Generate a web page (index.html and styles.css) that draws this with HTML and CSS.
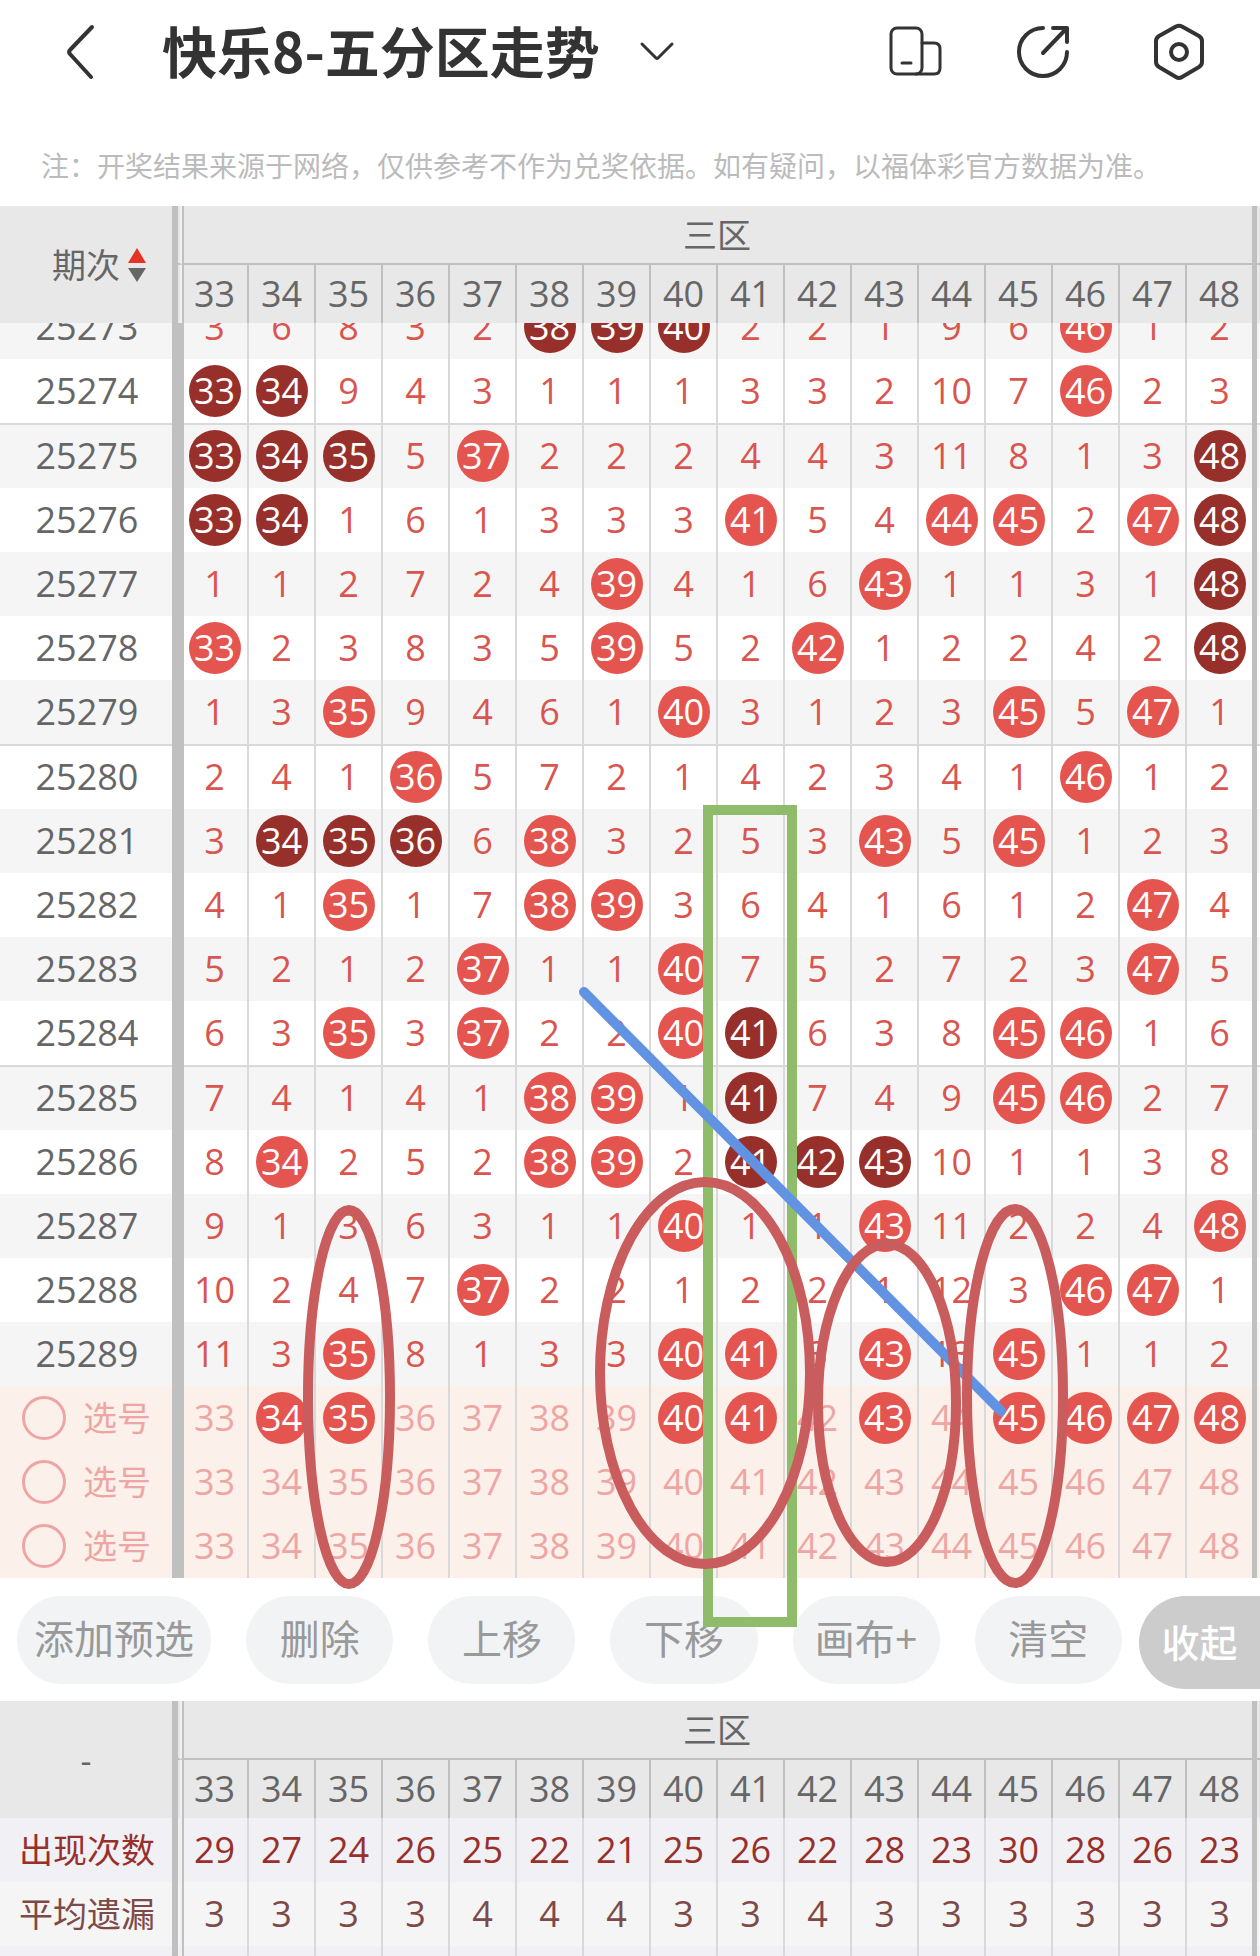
FILE: index.html
```html
<!DOCTYPE html>
<html lang="zh-CN">
<head>
    <meta charset="UTF-8">
    <meta name="viewport" content="width=device-width, initial-scale=1.0">
    <title>快乐8-五分区走势</title>
    <link rel="stylesheet" href="styles.css">
</head>
<body>
    <div class="app">
        <header class="nav">
            <button class="back" aria-label="返回">
                <svg width="32" height="56" viewBox="0 0 32 56"><path d="M28 3L6 26Q4 28 6 30L27 53"/></svg>
            </button>
            <h1>快乐8-五分区走势</h1>
            <button class="more" aria-label="切换走势">
                <svg width="34" height="20" viewBox="0 0 34 20"><path d="M2 2L16 16Q17 17 18 16L32 2"/></svg>
            </button>
            <div class="tools">
                <button aria-label="横竖屏">
                    <svg width="56" height="56" viewBox="0 0 56 56"><rect x="3" y="4" width="31" height="46" rx="6"/><path d="M34 19H46Q52 19 52 25V44Q52 50 46 50H28M14 39H23"/></svg>
                </button>
                <button aria-label="分享">
                    <svg class="thick" width="56" height="56" viewBox="5 0 56 56"><path d="M28 4A24 24 0 1 0 52 28M38 4H52V18M51 5L28 29"/></svg>
                </button>
                <button aria-label="设置">
                    <svg class="thick" width="56" height="56" viewBox="1 0 56 56"><path d="M25 2.500Q28 1 31 2.500L48 12Q51 14 51 17V38Q51 41 48 43L31 53Q28 55 25 53L8 43Q5 41 5 38V17Q5 14 8 12Z"/><circle cx="28" cy="28" r="8"/></svg>
                </button>
            </div>
        </header>
        <p class="note">注：开奖结果来源于网络，仅供参考不作为兑奖依据。如有疑问，以福体彩官方数据为准。</p>

        <table>
            <colgroup><col class="c-period"><col class="c-gap"><col span="16"><col class="c-tail"></colgroup>
            <thead>
                <tr class="zone">
                    <th rowspan="2" class="period">
                        <button class="sort">期次
                            <svg width="18" height="36" viewBox="0 0 18 36"><path class="up" d="M9 1L18 16H0Z"/><path class="down" d="M0 21H18L9 35Z"/></svg>
                        </button>
                    </th>
                    <th class="gap"></th>
                    <th colspan="16" class="first">三区</th>
                    <th class="tail"></th>
                </tr>
                <tr class="nums"></tr>
            </thead>
        </table>
        <div class="trend" id="trend">
            <table>
                <colgroup><col class="c-period"><col class="c-gap"><col span="16"><col class="c-tail"></colgroup>
                <tbody id="rows"></tbody>
                <tbody id="picks"></tbody>
            </table>
        </div>

        <div class="actions">
            <button>添加预选</button>
            <button>删除</button>
            <button>上移</button>
            <button>下移</button>
            <button>画布+</button>
            <button>清空</button>
            <button class="fold">收起</button>
        </div>

        <div class="summary">
            <table>
                <colgroup><col class="c-period"><col class="c-gap"><col span="16"><col class="c-tail"></colgroup>
                <thead>
                    <tr class="zone">
                        <th rowspan="2" class="period">-</th>
                        <th class="gap"></th>
                        <th colspan="16" class="first">三区</th>
                        <th class="tail"></th>
                    </tr>
                    <tr class="nums"></tr>
                </thead>
                <tbody id="stats"></tbody>
            </table>
        </div>

        <!-- 画布标记 -->
        <svg class="canvas" viewBox="0 0 1260 1956" preserveAspectRatio="none">
            <rect class="green" x="708" y="810" width="84" height="812"/>
            <path class="blue" d="M584 992L1001 1411"/>
            <ellipse cx="349" cy="1397" rx="41" ry="187"/>
            <ellipse cx="705" cy="1373" rx="105" ry="191"/>
            <ellipse cx="887" cy="1403" rx="69" ry="159"/>
            <ellipse cx="1015" cy="1396" rx="48" ry="187"/>
        </svg>
    </div>
    <script src="trend.js"></script>
</body>
</html>
```

FILE: styles.css
```css
*{
    margin: 0;
    padding: 0;
    box-sizing: border-box;
}
body{
    background-color: #fff;
    color: #666;
    font-family: "Open Sans", "Noto Sans CJK SC", sans-serif;
}
button{
    border: 0;
    background: none;
    color: inherit;
    font: inherit;
    cursor: pointer;
}
.app{
    position: relative;
    display: flex;
    flex-direction: column;
    height: 100vh;
    overflow: hidden;
}

/* 顶部 */
.nav{
    display: flex;
    align-items: center;
    height: 104px;
    padding: 0 52px 0 64px;
}
.nav button{
    display: flex;
}
.nav svg{
    overflow: visible;
    fill: none;
    stroke: #333;
    stroke-width: 3;
    stroke-linecap: round;
    stroke-linejoin: round;
}
.nav .back svg,
.nav .thick{
    stroke-width: 4;
}
.nav h1{
    margin-left: 66px;
    padding-bottom: 6px;
    color: #333;
    font: 700 55px/80px "Noto Sans CJK SC", sans-serif;
}
.nav .more{
    margin-left: 40px;
}
.tools{
    display: flex;
    gap: 76px;
    margin-left: auto;
}
.note{
    height: 102px;
    padding: 41px 41px 0;
    color: #bbb;
    font: 28px/40px "Noto Sans CJK SC", sans-serif;
    white-space: nowrap;
}

/* 走势表 */
.trend{
    flex: 1;
    min-height: 0;
    overflow: hidden auto;
    scrollbar-width: none;
}
table{
    width: 100%;
    table-layout: fixed;
    border-collapse: separate;
    border-spacing: 0;
    font-size: 36px;
    line-height: 52px;
    text-align: center;
}
.c-period{
    width: 172px;
}
.c-gap,
.c-tail{
    width: 8px;
}
th{
    font-weight: 400;
}
tbody th{
    padding-left: 2px;
}
thead th{
    background-color: #e8e8e8;
}
.zone{
    height: 59px;
}
.zone th{
    font-size: 34px;
}
.zone th:not(.period){
    border-bottom: 2px solid #c0c0c0;
}
.nums{
    height: 58px;
}
.nums th{
    border-left: 2px solid #c0c0c0;
}
thead .gap,
.nums .gap{
    border-left: 6px solid #c0c0c0;
}
thead .first,
.nums .first{
    border-left: 2px solid #f0f0f0;
    box-shadow: inset 2px 0 #c0c0c0;
}
.tail,
.nums .tail{
    border-left: 5px solid #c0c0c0;
}
.sort{
    display: inline-flex;
    align-items: center;
    gap: 8px;
    padding-left: 26px;
}
.up{
    fill: #e63323;
}
.down{
    fill: #666;
}
tbody tr{
    height: 64px;
}
tbody td{
    border-left: 2px solid #d9d9d9;
    color: #d9554f;
}
tbody .gap{
    border-left: 0;
    background-color: #c0c0c0;
}
tbody .tail{
    border-left: 5px solid #c0c0c0;
}
.odd{
    background-color: #f5f5f5;
}
/* 每五期一条分隔线 */
tbody .line{
    height: 65px;
}
.line th,
.line td:not(.gap){
    box-shadow: inset 0 2px #d9d9d9;
}
tbody td.first{
    border-left-color: #c0c0c0;
    box-shadow: inset 2px 0 #c0c0c0;
}
tbody .line td.first{
    box-shadow: inset 2px 0 #c0c0c0, inset 0 2px #d9d9d9;
}
.ball{
    display: block;
    width: 52px;
    height: 52px;
    margin: 0 auto;
    border-radius: 50%;
}
.hit{
    background-color: #e4554f;
    color: #fff;
}
.dark{
    background-color: #97302b;
    color: #fff;
}

/* 预选 */
.pick{
    background-color: #fcf0ea;
}
.pick th,
.pick td{
    color: #eda6a3;
}
.pick .hit{
    color: #fff;
}
.pick label{
    display: flex;
    align-items: center;
    gap: 17px;
    padding-left: 20px;
    font-size: 34px;
}
.pick input{
    width: 44px;
    height: 44px;
    border: 3px solid #eda6a3;
    border-radius: 50%;
    appearance: none;
}

/* 操作栏 */
.actions{
    display: flex;
    align-items: flex-start;
    gap: 35px;
    padding: 18px 0 12px 17px;
}
.actions button{
    flex: 147 1 0;
    height: 88px;
    padding-bottom: 2px;
    border-radius: 44px;
    background-color: #f1f3f5;
    color: #999;
    font-size: 40px;
    line-height: 60px;
    white-space: nowrap;
}
.actions button:first-child{
    flex-grow: 194;
}
.actions .fold{
    flex-grow: 121;
    height: 93px;
    margin-left: -18px;
    border-radius: 47px 0 0 47px;
    background-color: #ccc;
    color: #fff;
    font-size: 38px;
    font-weight: 500;
}

/* 统计 */
.summary{
    height: 255px;
    overflow: hidden;
}
.summary tbody th{
    font-size: 34px;
}
.summary tbody .gap{
    border-left: 6px solid #c0c0c0;
    background: none;
}
.summary tbody td.first{
    border-left-color: #f0f0f0;
}
.count{
    background-color: #f1f0f5;
}
.count th,
.count td{
    color: #97302b;
}
.avg th,
.avg td{
    color: #7d4a48;
}

.canvas{
    position: absolute;
    top: 0;
    left: 0;
    width: 100%;
    height: 100%;
    fill: none;
    stroke: #c95c5c;
    stroke-width: 10;
    pointer-events: none;
}
.green{
    stroke: #8fbc6a;
}
.blue{
    stroke: #6293e2;
    stroke-linecap: round;
}
```

FILE: trend.js
```js
var START = 33;

// R 红球, D 连号深色球, 数字为遗漏
var issues = [
    ['25273', '3 6 8 3 2 D D D 2 2 1 9 6 R 1 2'],
    ['25274', 'D D 9 4 3 1 1 1 3 3 2 10 7 R 2 3'],
    ['25275', 'D D D 5 R 2 2 2 4 4 3 11 8 1 3 D'],
    ['25276', 'D D 1 6 1 3 3 3 R 5 4 R R 2 R D'],
    ['25277', '1 1 2 7 2 4 R 4 1 6 R 1 1 3 1 D'],
    ['25278', 'R 2 3 8 3 5 R 5 2 R 1 2 2 4 2 D'],
    ['25279', '1 3 R 9 4 6 1 R 3 1 2 3 R 5 R 1'],
    ['25280', '2 4 1 R 5 7 2 1 4 2 3 4 1 R 1 2'],
    ['25281', '3 D D D 6 R 3 2 5 3 R 5 R 1 2 3'],
    ['25282', '4 1 R 1 7 R R 3 6 4 1 6 1 2 R 4'],
    ['25283', '5 2 1 2 R 1 1 R 7 5 2 7 2 3 R 5'],
    ['25284', '6 3 R 3 R 2 2 R D 6 3 8 R R 1 6'],
    ['25285', '7 4 1 4 1 R R 1 D 7 4 9 R R 2 7'],
    ['25286', '8 R 2 5 2 R R 2 D D D 10 1 1 3 8'],
    ['25287', '9 1 3 6 3 1 1 R 1 1 R 11 2 2 4 R'],
    ['25288', '10 2 4 7 R 2 2 1 2 2 1 12 3 R R 1'],
    ['25289', '11 3 R 8 1 3 3 R R 3 R 13 R 1 1 2']
];
var picks = [
    [34, 35, 40, 41, 43, 45, 46, 47, 48],
    [],
    []
];
var stats = [
    ['count', '出现次数', '29 27 24 26 25 22 21 25 26 22 28 23 30 28 26 23'],
    ['avg odd', '平均遗漏', '3 3 3 3 4 4 4 3 3 4 3 3 3 3 3 3'],
    ['count', '', '']
];

function row(cls, head, cells){
    var html = '<tr class="' + cls + '"><th scope="row">' + head + '</th><td class="gap"></td>';
    for(var i = 0; i < 16; i++){
        html += '<td' + (i == 0 ? ' class="first"' : '') + '>' + (cells[i] || '') + '</td>';
    }
    return html + '<td class="tail"></td></tr>';
}

var nums = '<th class="gap"></th>';
for(var n = 0; n < 16; n++){
    nums += '<th' + (n == 0 ? ' class="first"' : '') + '>' + (START + n) + '</th>';
}
nums += '<th class="tail"></th>';
document.querySelectorAll('.nums').forEach(function(tr){
    tr.innerHTML = nums;
});

document.getElementById('rows').innerHTML = issues.map(function(item){
    var cls = [];
    if(item[0] % 2 == 1) cls.push('odd');
    if(item[0] % 5 == 0) cls.push('line');
    var cells = item[1].split(' ').map(function(v, i){
        if(v == 'R') return '<span class="ball hit">' + (START + i) + '</span>';
        if(v == 'D') return '<span class="ball dark">' + (START + i) + '</span>';
        return v;
    });
    return row(cls.join(' '), item[0], cells);
}).join('');

document.getElementById('picks').innerHTML = picks.map(function(chosen){
    var cells = [];
    for(var i = START; i < START + 16; i++){
        cells.push('<button class="ball' + (chosen.indexOf(i) > -1 ? ' hit' : '') + '">' + i + '</button>');
    }
    return row('pick', '<label><input type="radio" name="pick">选号</label>', cells);
}).join('');

document.getElementById('picks').onclick = function(e){
    if(e.target.tagName == 'BUTTON'){
        e.target.classList.toggle('hit');
    }
};

document.getElementById('stats').innerHTML = stats.map(function(s){
    return row(s[0], s[1], s[2].split(' '));
}).join('');

// 默认滚动到最新一期
var trend = document.getElementById('trend');
trend.scrollTop = trend.scrollHeight;
```
